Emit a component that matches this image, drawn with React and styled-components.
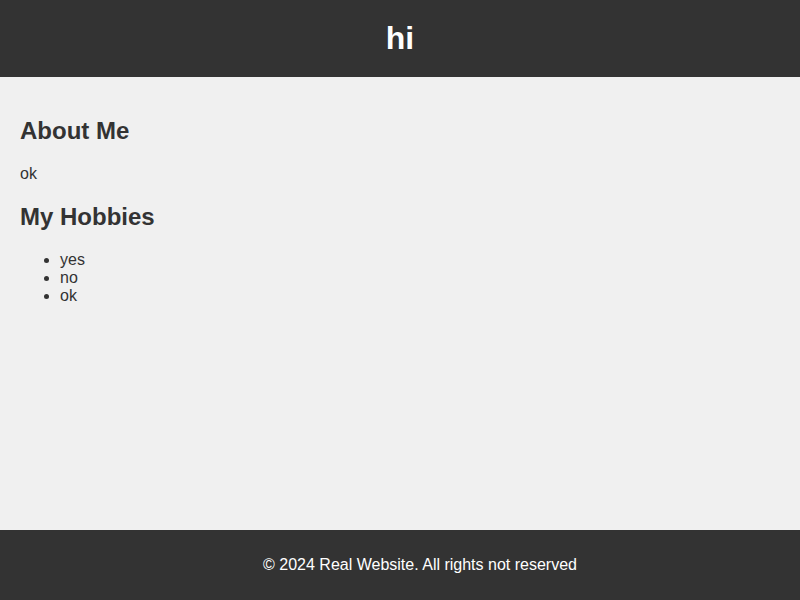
import React from "react";
import styled, { createGlobalStyle } from "styled-components";

const Global = createGlobalStyle`
  html, body { margin: 0; padding: 0; }
  body {
    font-family: "Liberation Sans", Arial, sans-serif;
    background: #f0f0f0;
    color: #333;
  }
`;

const Page = styled.div`
  min-height: 100vh;
  display: flex;
  flex-direction: column;
`;

const Header = styled.header`
  background: #333;
  color: #fff;
  padding: 20px;
  text-align: center;
`;

const Title = styled.h1`
  margin: 0;
  font-size: 32px;
`;

const Main = styled.main`
  flex: 1;
  padding: 20px;
`;

const Heading = styled.h2`
  font-size: 24px;
  margin: 19.92px 0;
`;

const Text = styled.p`
  margin: 16px 0;
`;

const List = styled.ul`
  margin: 16px 0;
  padding-left: 40px;
`;

const Footer = styled.footer`
  background: #333;
  color: #fff;
  text-align: center;
  padding: 10px 0 10px 40px;
`;

export default function App() {
  return (
    <Page>
      <Global />
      <Header>
        <Title>hi</Title>
      </Header>
      <Main>
        <Heading>About Me</Heading>
        <Text>ok</Text>
        <Heading>My Hobbies</Heading>
        <List>
          <li>yes</li>
          <li>no</li>
          <li>ok</li>
        </List>
      </Main>
      <Footer>
        <Text>© 2024 Real Website. All rights not reserved</Text>
      </Footer>
    </Page>
  );
}
